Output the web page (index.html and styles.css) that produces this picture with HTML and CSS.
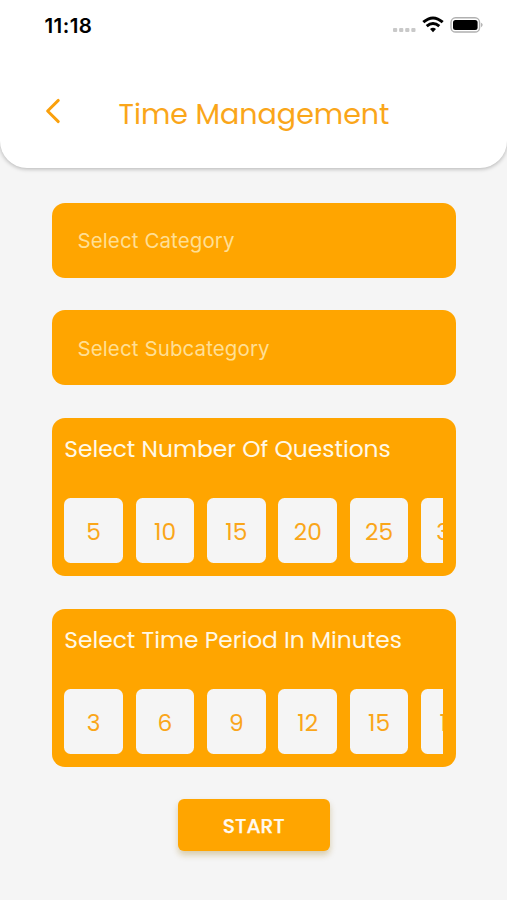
FILE: index.html
```html
<!DOCTYPE html>
<html lang="en">
<head>
<meta charset="utf-8">
<title>Time Management</title>
<link rel="stylesheet" href="styles.css">
</head>
<body>
<header class="header">
  <div class="status">
    <span class="clock">11:18</span>
    <svg class="indicators" width="92" height="20" viewBox="0 0 92 20">
      <g fill="#c9c9c9"><rect x="1" y="14" width="4.2" height="4" rx="1"/><rect x="7.1" y="14" width="4.2" height="4" rx="1"/><rect x="13.2" y="14" width="4.2" height="4" rx="1"/><rect x="19.3" y="14" width="4.2" height="4" rx="1"/></g>
      <g fill="none" stroke="#000" stroke-width="2.9"><path d="M31.3 8.2Q41 -.4 50.7 8.2"/><path d="M34.7 12.2Q41 6.6 47.3 12.2"/></g>
      <path d="M38 15Q41 12.5 44 15L41 18.3Z"/>
      <rect x="59" y="3.8" width="28.6" height="14.2" rx="4.6" fill="none" stroke="#b0b0b0" stroke-width="1.4"/>
      <rect x="61" y="5.9" width="24.6" height="10.2" rx="2.5"/>
      <path d="M89.4 8.8Q91.5 10.8 89.4 13.2Z" fill="#888"/>
    </svg>
  </div>
  <div class="bar">
    <svg class="back" width="16" height="26" viewBox="0 0 16 26"><path d="M13.3 2.4L2.6 13L13.3 23.6" fill="none" stroke="#faa00c" stroke-width="2.9" stroke-linecap="round" stroke-linejoin="round"/></svg>
    <h1 class="title">Time Management</h1>
  </div>
</header>
<main class="form">
  <div class="field"><span>Select Category</span></div>
  <div class="field"><span>Select Subcategory</span></div>
  <section class="panel">
    <h2 class="label">Select Number Of Questions</h2>
    <div class="options"><span class="tile">5</span><span class="tile">10</span><span class="tile">15</span><span class="tile">20</span><span class="tile">25</span><span class="tile">30</span></div>
  </section>
  <section class="panel">
    <h2 class="label">Select Time Period In Minutes</h2>
    <div class="options"><span class="tile">3</span><span class="tile">6</span><span class="tile">9</span><span class="tile">12</span><span class="tile">15</span><span class="tile">18</span></div>
  </section>
  <button class="start"><span>START</span></button>
</main>
</body>
</html>
```
FILE: styles.css
```css
* { box-sizing: border-box; }
body {
  margin: 0;
  height: 900px;
  overflow: hidden;
  background: #f5f5f5;
  font-family: Poppins, Inter, sans-serif;
}
.header {
  height: 168px;
  background: #fff;
  border-radius: 0 0 27px 27px;
  box-shadow: 0 1px 4px rgba(0, 0, 0, .28);
}
.status {
  display: flex;
  justify-content: space-between;
  padding: 14px 23px 0 44.5px;
  height: 85px;
}
.clock {
  font: 600 20.5px/23px Inter, sans-serif;
  letter-spacing: .45px;
}
.bar {
  display: flex;
  align-items: flex-start;
  padding-left: 45px;
}
.back { margin-top: 12.5px; }
.title {
  margin: 9px 0 0 57.5px;
  color: #faa61a;
  font-size: 28.5px;
  font-weight: 400;
  line-height: 40px;
  white-space: nowrap;
}
.form {
  display: flex;
  flex-direction: column;
  align-items: center;
  gap: 32.6px;
  padding: 34.8px 51px 0 51.5px;
}
.field {
  display: flex;
  align-items: center;
  width: 100%;
  height: 75px;
  padding: .5px 0 0 26px;
  border-radius: 13px;
  background: #ffa500;
  color: #ffdf94;
  font: 400 20.5px Inter, sans-serif;
  letter-spacing: .1px;
}
.panel {
  width: 100%;
  height: 158px;
  padding: 12px 12.8px;
  border-radius: 13px;
  background: #ffa500;
}
.label {
  margin: 0 0 32.2px;
  height: 36px;
  color: #fff8e6;
  font-size: 23.35px;
  font-weight: 400;
  line-height: 38px;
  white-space: nowrap;
}
.options {
  display: flex;
  gap: 12.8px;
  overflow: hidden;
}
.tile {
  flex: 0 0 58.6px;
  height: 65px;
  border-radius: 6.5px;
  background: #f5f5f5;
  color: #faa61a;
  font-size: 23.35px;
  line-height: 67px;
  text-align: center;
}
.start {
  width: 152px;
  height: 52px;
  border: 0;
  border-radius: 6px;
  background: #ffa500;
  color: #fffaf0;
  font: 500 20.3px/52px Poppins, Inter, sans-serif;
  -webkit-text-stroke: .25px #fffaf0;
  box-shadow: 0 4px 6px rgba(150, 110, 0, .3);
}
```
